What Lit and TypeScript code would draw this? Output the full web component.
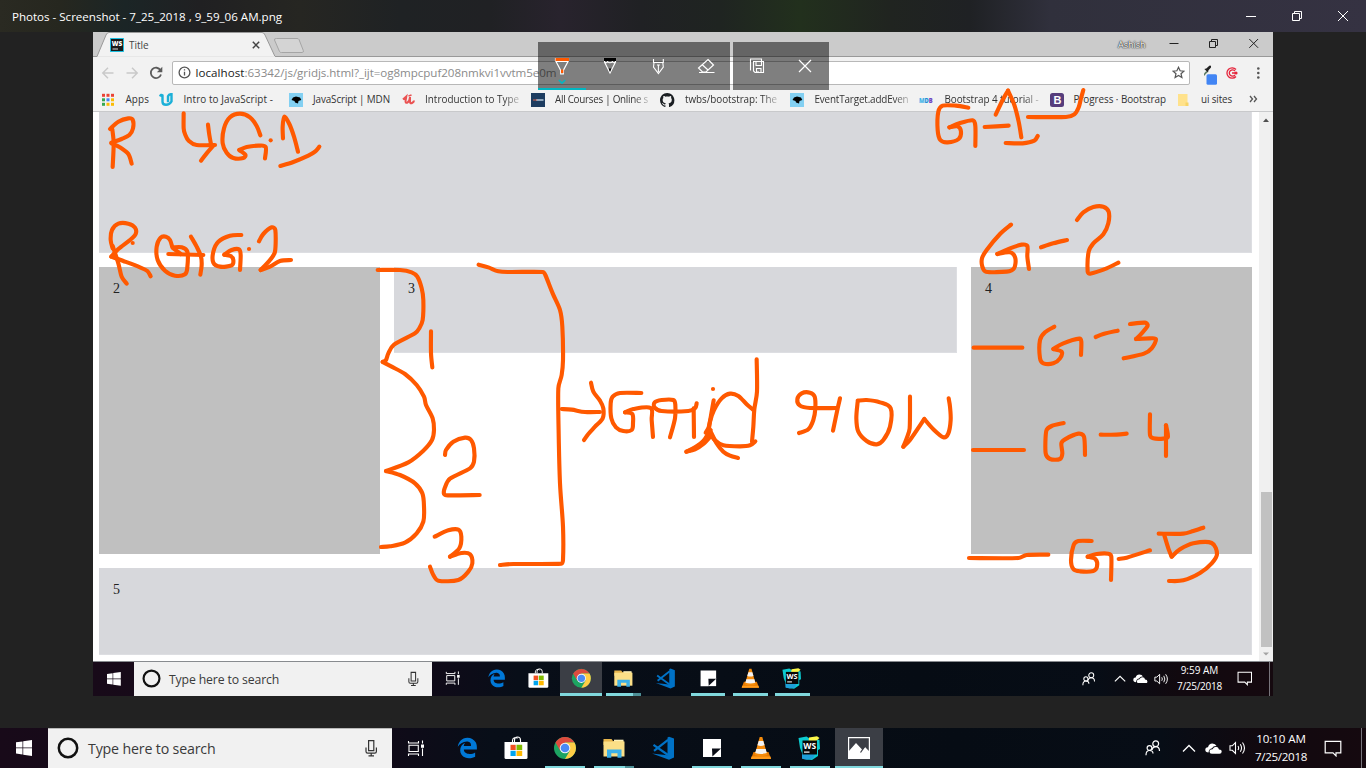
import { LitElement, html, svg, css } from "lit";
import { customElement, property } from "lit/decorators.js";

type Pt = [number, number];

/* A single line of text whose letter spacing is tuned to fill a given width. */
@customElement("fit-label")
class FitLabel extends LitElement {
  @property({ type: Number }) w = 0;
  @property() text = "";
  static styles = css`
    :host { display: block; white-space: pre; flex: none; }
    .t { display: inline-block; white-space: pre; }
  `;
  render() {
    return html`<span class="t">${this.text}</span>`;
  }
  updated() {
    const el = this.renderRoot.querySelector(".t") as HTMLElement;
    el.style.letterSpacing = "0px";
    const range = document.createRange();
    range.selectNodeContents(el);
    const n = this.text.length;
    const zoom = Number(getComputedStyle(this).getPropertyValue("--z")) || 1;
    const natural = range.getBoundingClientRect().width / zoom;
    if (this.w && n) el.style.letterSpacing = `${((this.w - natural) / n).toFixed(3)}px`;
  }
}

/* Points joined by a smooth curve. */
function curve(p: Pt[]): string {
  if (p.length === 1) return `M${p[0]}h.1`;
  let d = `M${p[0]}`;
  for (let i = 0; i < p.length - 1; i++) {
    const a = p[i - 1] ?? p[i], b = p[i], c = p[i + 1], e = p[i + 2] ?? c;
    const len = Math.hypot(c[0] - b[0], c[1] - b[1]);
    const t = (u: Pt, v: Pt): Pt => {
      const l = Math.hypot(v[0] - u[0], v[1] - u[1]) || 1;
      const k = Math.min(1 / 6, (len * 0.36) / l);
      return [(v[0] - u[0]) * k, (v[1] - u[1]) * k];
    };
    const t1 = t(a, c), t2 = t(b, e);
    d += `C${b[0] + t1[0]},${b[1] + t1[1]} ${c[0] - t2[0]},${c[1] - t2[1]} ${c[0]},${c[1]}`;
  }
  return d;
}
const parse = (s: string): Pt[] => s.trim().split(/\s+/).map((q) => q.split(",").map(Number) as Pt);

const INK: { x: number; y: number; s: string[] }[] = [
  { x: 0, y: 0, s: [
    "330,387 355,365 385,355 398,359 399,385 388,405 365,417 334,428",
    "337,388 341,430 338,501", "334,430 362,443 385,462 395,491",
    "551,340 551,385 555,402 566,422 590,435 645,435", "624,374 628,405 633,432", "640,437 620,460 603,482",
    "781,406 770,378 750,352 720,341 690,352 672,385 668,430 680,458 700,474 730,474 736,464 718,450",
    "718,450 740,441 775,437 797,441 795,475", "812,421",
    "849,415 848,380 853,350 868,372 882,410 894,455", "841,498 880,486 925,467 945,455 958,440"] },
  { x: 906, y: 0, s: [
    "187,323 150,317 110,317 97,335 95,390 103,420 125,427 158,417 165,395 155,379 130,382",
    "130,382 160,370 200,361 208,378 208,438", "236,381 308,377",
    "269,344 290,300 306,272", "306,272 325,315 338,365 346,412", "299,429 350,430 385,422 395,408",
    "366,351 480,351 505,343 518,322 525,295 532,270"] },
  { x: 90, y: 180, s: [
    "68,205 62,180 66,150 85,131 115,131 135,143 137,162 120,180 85,207 64,230",
    "68,198 85,250 95,290 110,311", "64,230 100,243 150,262 172,273 182,289", "128,189",
    "247,202 240,180 228,170 212,173 200,200 203,240 225,272 255,287 285,283 292,262 292,215 275,202 250,202",
    "250,205 272,222", "235,222 340,225", "303,170 320,200 333,230 335,255 331,284",
    "454,165 420,167 385,185 370,215 370,248 390,260 425,256 430,240 422,228 403,224",
    "403,224 425,210 447,208 452,225 450,270", "477,207",
    "507,184 520,162 545,142 556,150 555,215 540,240 512,270", "512,270 540,260 570,243 603,240"] },
  { x: 370, y: 250, s: [
    "23,60 90,60 125,67 142,80 155,115 160,150 158,210 148,235 135,250 72,284 55,310 48,330 38,336",
    "38,336 65,350 105,372 140,405 162,440 168,465 188,505 192,540 186,570 160,602 115,637 48,663",
    "48,663 90,675 135,700 157,730 162,770 160,815 140,850 105,878 60,889 33,891",
    "183,244 183,310 187,352",
    "225,615 228,600 250,575 285,563 303,570 312,595 312,635 300,655 240,686 225,712 222,732 235,736 329,735",
    "194,860 235,841 265,839 274,860 268,895 240,920", "240,920 275,909 300,913 307,940 295,965 265,990 205,992 190,975 180,950",
    "326,44 355,52 385,64 420,66 518,66 526,75 548,130 570,180 577,230 579,330 575,375 565,415 566,550 570,700 579,830 579,930 574,941 430,942 390,945",
    "575,477 605,479 645,486 690,486"] },
  { x: 580, y: 340, s: [
    "33,128 40,155 60,182 70,205 68,235 45,260 25,282 12,300",
    "184,159 120,159 98,170 92,190 94,235 108,262 130,273 155,270 159,250 157,222 135,217",
    "135,217 160,207 212,204 215,240 219,291",
    "350,190 345,205 325,213 245,213 224,203 224,187 245,180 280,180 286,195 285,235 270,292", "341,205 342,291",
    "401,181 395,215 386,262 377,278", "319,335 345,328 370,312 395,285", "319,335 345,322 370,303 388,275", "325,333 350,321 375,300 392,270",
    "399,147", "530,58 531,155 523,208 520,260 516,305",
    "518,208 500,193 475,168 450,161 425,175 402,210 390,245 386,275", "386,275 405,301 430,316 480,319 510,316 526,304",
    "392,275 410,310 430,335 450,347 474,354",
    "657,279 685,268 700,240 706,205 704,170 690,158 665,160 652,178 660,197 690,204 770,204", "780,175 773,205 759,272",
    "833,182 860,180 900,187 932,205 930,260 910,300 890,313 860,303 835,275 829,235 833,185",
    "990,170 989,265 980,295 970,320", "970,320 990,300 1033,237", "1033,237 1060,268 1090,292 1105,280 1112,240 1110,200 1106,175"] },
  { x: 950, y: 190, s: [
    "183,104 150,132 110,180 96,205 97,230 108,245 170,245 192,235 196,205 180,187 142,192",
    "142,192 180,175 215,164 232,168 232,200 237,237", "273,172 310,160 351,150",
    "381,90 400,67 430,51 460,50 476,65 475,100 460,133 430,160 416,185 413,245 420,251 470,235 505,218",
    "71,473 217,473",
    "313,410 285,427 270,450 270,505 280,520 310,520 330,505 335,485 310,477",
    "310,477 340,460 388,446 394,455 393,495", "437,441 460,432 503,422",
    "540,402 585,398 593,407 575,430 558,447", "558,447 600,445 618,448 605,475 582,491 521,505"] },
  { x: 950, y: 390, s: [
    "69,180 222,180",
    "341,99 305,108 289,122 287,190 300,207 330,207 337,190 334,160 345,148 385,131 402,140 405,195",
    "452,134 500,134 530,131", "600,73 600,135 610,145 640,146 653,142 653,130 648,106", "648,106 648,198",
    "57,504 205,504 230,495 295,494",
    "425,453 385,453 371,465 363,510 370,537 390,544 430,543 441,530 437,508 413,500",
    "413,500 440,492 475,491 484,500 483,570", "506,507 530,503 600,481",
    "626,431 700,431 730,423 760,413", "643,436 655,475 665,500", "665,500 690,478 730,460 785,459 801,492 785,520 750,549 700,571 657,573"] },
];

@customElement("ink-layer")
class InkLayer extends LitElement {
  static styles = css`
    :host { display: block; }
    svg { display: block; }
    path { fill: none; stroke: #ff5900; stroke-width: 12.4; stroke-linecap: round; stroke-linejoin: round; }
  `;
  render() {
    return html`<svg width="1366" height="768" viewBox="0 0 1366 768">
      ${INK.map((g) => svg`<g transform="translate(${g.x} ${g.y}) scale(.33333)">
        ${g.s.map((s) => svg`<path d=${curve(parse(s))}></path>`)}
      </g>`)}
    </svg>`;
  }
}

const icons: Record<string, unknown> = {
  edge: svg`<path transform="translate(1.7 1.3) scale(.0415)" fill="#0078d7" d="M25.7 228.2l.3-.5zM486.300 243.700c0-44-7.800-84.500-28.800-122.400C416.500 47.900 343.900 8 258.900 8 119 7.700 40.600 113.200 26.100 227.700c42.400-61.300 117-121.400 220.300-125 0 0 109.700 0 99.400 105H170c6.400-37.400 18.600-59 34.300-78.900-75 34.900-121.800 96-120.700 188.300.8 71.400 50.100 144.800 120.700 172 83.400 31.800 192.800 7.200 240.200-21.400V363.300c-80.900 56.500-270.900 60.900-272.300-67.600h314.100z"></path>`,
  store: svg`<path fill="none" stroke="#fff" stroke-width="1.1" d="M8.500 6V4.500a3 3 0 0 1 5-2.200M10.500 6V4a3 3 0 0 1 6 0V6"></path>
    <path fill="#fff" d="M.5 6h23v15.500q0 1.500-1.500 1.500H2q-1.500 0-1.500-1.500z"></path>
    <path fill="#f25022" d="M6.500 8.800h5.200V14H6.500z"></path><path fill="#7fba00" d="M12.500 8.800h5.700V14h-5.700z"></path>
    <path fill="#00a4ef" d="M6.500 14.800h5.200V20H6.500z"></path><path fill="#ffb900" d="M12.500 14.800h5.700V20h-5.700z"></path>`,
  chrome: svg`<circle cx="12" cy="12" r="11" fill="#1da462"></circle>
    <path fill="#dd4b3e" d="M2.500 6.500A11 11 0 0 1 21.500 6.500H12L7.200 14.800z"></path>
    <path fill="#ffcd46" d="M21.500 6.500A11 11 0 0 1 12 23L16.800 14.800 12 6.500z"></path>
    <circle cx="12" cy="12" r="5.300" fill="#f5f5f5"></circle><circle cx="12" cy="12" r="4.300" fill="#4a8af4"></circle>`,
  folder: svg`<path fill="#e8b64c" d="M1.500 3h8l1.500 2h10.500v4H1.500z"></path><path fill="#fff2b8" d="M12 3.700h9.500v2H12z"></path>
    <path fill="#fbdf87" d="M1.500 5.500h21V20.500h-21z"></path><path fill="#3bb0e8" d="M5 13.500h14.500v8.200H15.500v-4.500H9.300v4.500H5z"></path>`,
  code: svg`<path fill="#0072c6" d="M18 .7l5 1.800V21.500l-5 2.300L1 17.500l15.500 1.700V1.500z"></path>
    <path fill="none" stroke="#0072c6" stroke-width="2.200" d="M17 3.800L3 14.800M2.500 8.800L17 19"></path>`,
  note: svg`<path fill="#fff" d="M3 3h18v9L12 21H3z"></path><path fill="#fff" d="M12 12h9v9h-9z"></path><path d="M12 12.500h9L12.400 20.500z" fill="#0a0d16"></path>`,
  vlc: svg`<path fill="#e67a00" d="M4.500 16h15l2.500 7H2z"></path><path fill="#ff9a1a" d="M2.500 20.500h19L22 23H2z"></path>
    <path fill="#f58b0b" d="M10.700 1h2.600l5 18q-6.300 2.500-12.600 0z"></path><path fill="#f3f3f3" d="M9.700 5h4.600l1.300 4.300q-3.600 1.200-7.200 0zM7.300 13h9.400l1.100 4q-5.800 1.800-11.600 0z"></path>`,
  ws: svg`<path fill="#0ccbd0" d="M.5 2l8-1.500 3 2 6 .500 4 1 .5 9-2 1v6l-6 4-9-1-1-6L2 12z"></path>
    <path fill="#1d9fd8" d="M4 18l13 0-2 4.500-6 1.200-5-1z"></path>
    <path fill="#fcf84a" d="M11 1.500l8-1.200L21.500 2l-5 4.500h-6z"></path>
    <path fill="#080808" d="M4.500 4.500h14.500v14H4.500z"></path>
    <text x="5.300" y="12.500" font-size="8" font-weight="700" font-family="Open Sans, sans-serif" textLength="12.800" lengthAdjust="spacingAndGlyphs" fill="#fff">WS</text>
    <path fill="#fff" d="M6 15.500h5.500v1.200H6z"></path>`,
  photos: svg`<path fill="none" stroke="#fff" stroke-width="1.200" d="M1.600 1.600h20.800v20.800H1.600z"></path>
    <path fill="#fff" d="M1.500 15.500L9 7l6.500 7 2.500-3 4.500 4.500v7h-21z"></path><path stroke="#3b3e45" stroke-width="1.200" d="M13.500 16.500l4-5.700"></path>`,
};

interface App { icon: string; state?: "run" | "many" }
const APPS: App[] = [
  { icon: "edge" }, { icon: "store" }, { icon: "chrome", state: "run" }, { icon: "folder", state: "many" },
  { icon: "code" }, { icon: "note", state: "run" }, { icon: "vlc", state: "run" }, { icon: "ws", state: "run" },
];

@customElement("task-bar")
class TaskBar extends LitElement {
  @property() time = "";
  @property() active = "";
  @property({ type: Number }) timeWidth = 48;
  static styles = css`
    :host { display: block; width: 1366px; height: 40px; font-family: "Open Sans", "Noto Sans", sans-serif; }
    .bar { display: flex; height: 40px; background: linear-gradient(90deg, #180a19 0, #100a18 28%, #080e18 36%, #060c14 70%, #070d16 85%, #11090f 92%, #15090f 100%); }
    .cell { width: 48px; height: 40px; display: flex; align-items: center; justify-content: center; flex: none; position: relative; }
    .search { width: 344px; background: #f1f1f1; display: flex; align-items: center; box-shadow: inset 0 1px #b9b9b9; color: #3a3a3a; flex: none; font-size: 14.200px; }
    .search fit-label { padding-top: var(--dy, 0px); }
    .ring { width: 22px; margin: 0 9px; height: 22px; }
    .mic { margin-left: auto; margin-right: 14px; }
    .apps { display: flex; gap: 1px; margin-left: 3px; }
    .on { background: #3b3e45; }
    .line { position: absolute; bottom: 0; height: var(--line, 2px); left: 4px; right: 4px; background: #80d8dd; }
    .on .line { left: 0; right: 0; }
    .many .line { background: linear-gradient(90deg, #80d8dd 78%, #4d8f96 78%); }
    .tray { display: flex; margin-left: auto; }
    .half { width: 24px; }
    .clock { width: 60px; display: flex; flex-direction: column; align-items: center; color: #fff; font-size: 11.600px; line-height: 18px; padding: 2px 0 0 4px; box-sizing: border-box; }
    .show { width: 4px; border-left: 1px solid #77747b; margin-left: 4px; }
    svg { display: block; }
  `;
  render() {
    const apps = this.active === "photos" ? [...APPS, { icon: "photos", state: "run" } as App] : APPS;
    return html`<div class="bar">
      <div class="cell"><svg width="16" height="16" viewBox="0 0 16 16" fill="#fff"><path d="M0 2.300L6.500 1.400V7.600H0zM7.200 1.300L16 0V7.600H7.200zM0 8.300h6.500v6.200L0 13.600zM7.200 8.300H16V16l-8.800-1.300z"></path></svg></div>
      <div class="search">
        <svg class="ring" viewBox="0 0 22 22"><circle cx="11" cy="11" r="9.200" fill="none" stroke="#111" stroke-width="2.500"></circle></svg>
        <fit-label .w=${127.5} .text=${"Type here to search"}></fit-label>
        <svg class="mic" width="13" height="18" viewBox="0 0 13 18" fill="none" stroke="#333" stroke-width="1.200"><path d="M3.600 1.600h5.200v10H3.600zM1 8.500v4q0 1.700 1.700 1.700h7q1.700 0 1.700-1.700v-4M6.200 14.200v2.500M3.500 16.800h5.500"></path></svg>
      </div>
      <div class="cell"><svg width="18" height="17" viewBox="0 0 18 17" fill="none" stroke="#fff" stroke-width="1.100"><path d="M1.500 1v2h10V1M1.500 16v-2h10v2M2 5.300h9.300v6.200H2zM15.500.5v3M15.500 8.500V16"></path><path fill="#fff" stroke="none" d="M14 4.500h3v3.300h-3z"></path></svg></div>
      <div class="apps">${apps.map((a) => html`<div class="cell ${a.icon === this.active ? "on" : ""} ${a.state ?? ""}">
        <svg width="24" height="24" viewBox="0 0 24 24">${icons[a.icon]}</svg>${a.state ? html`<i class="line"></i>` : ""}</div>`)}</div>
      <div class="tray">
        <div class="cell"><svg width="16" height="16" viewBox="0 0 16 16" fill="none" stroke="#fff" stroke-width="1.200"><circle cx="4.500" cy="8" r="2.400"></circle><circle cx="10.700" cy="3.800" r="2.900"></circle><path d="M1 15.300q0-4.800 3.500-4.800T8 13.500M6.800 10q1-3.300 4-3.300 3.600 0 3.700 4.300"></path></svg></div>
        <div class="cell half"><svg width="14" height="9" viewBox="0 0 14 9" fill="none" stroke="#fff" stroke-width="1.300"><path d="M1 7.500L7 1.500 13 7.500"></path></svg></div>
        <div class="cell half"><svg width="17" height="11" viewBox="0 0 17 11" fill="#fff"><path d="M3.500 9.500Q.3 9.500.3 6.800T3 4.200Q4 .5 7.300.5T11.500 3Q8.500 2.500 7 5.200 4 5.500 3.500 9.500z"></path><path d="M6.800 10.800Q4.500 10.800 4.500 8.500T7.500 6.200Q8.500 3.700 11 3.700T14 6.400Q16.700 6.400 16.700 8.600T14.500 10.800z"></path></svg></div>
        <div class="cell half"><svg width="17" height="14" viewBox="0 0 17 14" fill="none" stroke="#fff" stroke-width="1.100"><path d="M1 4.800h2.300L6.500 1.500V12.500L3.300 9.300H1zM9 5q1.300 2 0 4M11.300 3.300q2.500 3.700 0 7.400M13.500 1.500q4 5.500 0 11"></path></svg></div>
        <div class="clock"><fit-label .w=${this.timeWidth} .text=${this.time}></fit-label><fit-label .w=${52} .text=${"7/25/2018"}></fit-label></div>
        <div class="cell"><svg width="18" height="17" viewBox="0 0 18 17" fill="none" stroke="#fff" stroke-width="1.200"><path d="M1.200 1.200h15.600v11.500H12v3L9 12.700H1.200z" transform="translate(0 .2)"></path></svg></div>
        <div class="show"></div>
      </div>
    </div>`;
  }
}

const mdn = svg`<path fill="#83d0f2" d="M0 0h14v14H0z"></path><path fill="#000" d="M2.500 7L4 4.500 7 3.500 11 4.500 12.300 7 9.500 8 9 10.500 6 9.500 5.500 8z"></path>`;
interface Mark { w: number; slot: number; label: string; t: number; fade?: boolean; art: unknown }
const MARKS: Mark[] = [
  { w: 57, slot: 23.5, label: "Apps", t: 23.5, art: svg`${[["#ea4335", "#ea4335", "#ea4335"], ["#34a853", "#4285f4", "#fbbc05"], ["#34a853", "#fbbc05", "#fbbc05"]].map((r, j) => r.map((c, i) => svg`<path fill=${c} d="M${i * 4.5} ${j * 4.5 + 0.8}h3v3h-3z"></path>`))}` },
  { w: 130, slot: 24.5, label: "Intro to JavaScript -", t: 89.5, art: svg`<path fill="none" stroke="#1cb0d8" stroke-width="2.400" d="M1 3.500q1-2.500 2.500-1.200v6.500q0 3 3.500 3t5.500-3.300V1.200Q10 1 9 3.200v6"></path>` },
  { w: 113, slot: 24, label: "JavaScript | MDN", t: 77, art: mdn },
  { w: 129, slot: 23, label: "Introduction to Type", t: 94, fade: true, art: svg`<path fill="none" stroke="#ea5252" stroke-width="2" d="M1 6.500L4.300 3.500 3.500 8q0 2.500 2 1.500t2.500-5.500v4.500q0 2.500 2 1.500t2-2.500"></path><path stroke="#ea5252" stroke-width="1.500" d="M6.500 3l3-1"></path>` },
  { w: 129, slot: 24, label: "All Courses | Online s", t: 93, fade: true, art: svg`<path fill="#1d3c60" d="M0 0h14v14H0z"></path><path fill="#8ea5bb" d="M5 6h7.500v2H5z"></path><path fill="#d4604d" d="M2 6.500h4v1H2z"></path>` },
  { w: 130, slot: 25, label: "twbs/bootstrap: The", t: 92, fade: true, art: svg`<path fill="#1b1f23" transform="scale(.9)" d="M8 0C3.580 0 0 3.580 0 8c0 3.540 2.290 6.530 5.470 7.590.4.070.550-.170.550-.380 0-.190-.010-.820-.010-1.490-2.010.370-2.530-.490-2.690-.940-.090-.230-.480-.940-.820-1.130-.280-.150-.680-.520-.010-.530.630-.010 1.080.580 1.230.820.720 1.210 1.870.870 2.330.660.070-.520.280-.870.510-1.070-1.780-.200-3.640-.890-3.640-3.950 0-.870.310-1.590.820-2.150-.080-.200-.360-1.020.080-2.120 0 0 .670-.210 2.200.820.640-.180 1.320-.270 2-.270s1.360.090 2 .270c1.530-1.040 2.200-.820 2.200-.820.440 1.100.160 1.920.080 2.120.510.560.820 1.270.820 2.150 0 3.070-1.870 3.750-3.650 3.950.290.250.540.730.540 1.480 0 1.070-.010 1.930-.010 2.200 0 .210.150.460.550.380A8.010 8.010 0 0 0 16 8c0-4.420-3.580-8-8-8z"></path>` },
  { w: 129, slot: 24.5, label: "EventTarget.addEven", t: 94, fade: true, art: mdn },
  { w: 131, slot: 25.5, label: "Bootstrap 4 tutorial -", t: 94, fade: true, art: svg`<text x="0" y="9.500" font-size="6.500" font-weight="800" font-family="Open Sans, sans-serif" textLength="13.700" lengthAdjust="spacingAndGlyphs"><tspan fill="#45b5e8">M</tspan><tspan fill="#1f8fd8">D</tspan><tspan fill="#6f42c1">B</tspan></text>` },
  { w: 128, slot: 23.5, label: "Progress · Bootstrap", t: 92.5, art: svg`<rect width="14" height="14" rx="2.500" fill="#563d7c"></rect><text x="3.500" y="11" font-size="11" font-weight="700" font-family="Liberation Sans, sans-serif" fill="#fff">B</text>` },
  { w: 71, slot: 23, label: "ui sites", t: 31, art: svg`<path fill="#ffe28c" d="M0 1h9.500v12H0z"></path><path fill="#f7d467" d="M7.500 9.500h3v3.500H7.500z"></path>` },
];

@customElement("app-root")
class AppRoot extends LitElement {
  static styles = css`
    :host { display: block; width: 1366px; height: 768px; overflow: hidden; background: #222; font-family: "Open Sans", "Noto Sans", sans-serif; position: relative; }
    * { box-sizing: border-box; }
    svg { display: block; flex: none; }
    .title { height: 32px; display: flex; align-items: center; padding-left: 12px; color: #fff; font-size: 11.600px;
      background: linear-gradient(90deg, #2a2a22 0, #26271f 60px, #1b2526 125px, #202022 200px, #262622 300px, #1f2224 400px, #202124 490px, #28232d 560px, #202124 640px, #1f2421 720px, #22301d 800px, #202420 890px, #1f2124 970px, #30303c 1050px, #353242 1366px); }
    .win { display: flex; margin-left: auto; }
    .win > * { width: 46px; height: 32px; }
    .stage { height: 696px; padding: 0 93px; }
    .shot { width: 1180px; height: 664px; background: #fff; display: flex; flex-direction: column; }
    .tabs { height: 25px; background: #cbcbcb; border-bottom: 1px solid #999; display: flex; position: relative; flex: none; }
    .tab { width: 186px; height: 25px; display: flex; align-items: center; padding-left: 17px; position: relative; color: #444; font-size: 10px; }
    .tab > svg.bg { position: absolute; left: 0; top: 0; }
    .tab > fit-label, .tab > svg { position: relative; }
    .tab > fit-label { margin-left: 5px; width: 123px; }
    .newtab { margin: 5px 0 0 -6px; }
    .cw { display: flex; align-items: center; margin-left: auto; height: 24px; color: #fff; font-size: 9px; }
    .cw fit-label { text-shadow: 0 0 1px #222, 0 0 1px #333, 0 0 2px #444; width: 28px; margin-right: 7px; }
    .cw svg { width: 40px; height: 24px; }
    .nav { height: 31px; background: #f2f2f2; display: flex; align-items: center; padding-left: 3px; flex: none; }
    .nav .b { width: 24px; height: 24px; }
    .url { width: 1018px; height: 24px; margin-left: 4px; border: 1px solid #b8b8b8; border-radius: 2px; background: #fff; display: flex; align-items: center; font-size: 11.600px; color: #8b8b8b; padding: 0 4px 0 5px; }
    .url .host { color: #222; margin-left: 4.500px; }
    .url .star { margin-left: auto; }
    .ext { margin-left: 14px; }
    .marks { height: 24px; background: #f2f2f2; border-bottom: 1px solid #c8c9cb; display: flex; align-items: flex-start; padding-left: 9px; font-size: 9.900px; color: #333; flex: none; }
    .mark, .more { display: flex; align-items: center; flex: none; height: 23px; }
    .slot { flex: none; }
    .mark fit-label, .more svg { margin-top: -1px; }
    .fade { -webkit-mask-image: linear-gradient(90deg, #000 84%, rgba(0,0,0,.25) 100%); mask-image: linear-gradient(90deg, #000 84%, rgba(0,0,0,.25) 100%); }
    .page { flex: 1; display: flex; background: #fff; min-height: 0; }
    .grid { width: 1153px; margin-left: 6px; display: grid; grid-template-columns: 281px 563px 281px; grid-template-rows: 141px 86px 187px 87px; gap: 14px; align-content: start; font: 14px "Liberation Serif", serif; color: #222; }
    .tile { background: #d7d8dc; padding: 14px; line-height: 15px; box-shadow: inset -1px -1px #dddee2; }
    .wide { grid-column: 1 / 4; }
    .tall { background: #c0c0c0; box-shadow: none; grid-row: 2 / 4; }
    .left { grid-column: 1; }
    .middle { grid-column: 2; grid-row: 2; }
    .right { grid-column: 3; }
    .scroll { width: 14px; margin-left: auto; background: #f0f0f0; display: flex; flex-direction: column; align-items: center; }
    .thumb { margin-top: auto; width: 11px; height: 155px; background: #c1c1c1; }
    .inner { height: 35px; overflow: hidden; background: #0b0c15; position: relative; padding-top: 0.450px; }
    .inner task-bar { zoom: 0.86384; --z: 0.86384; --line: 3px; --dy: 2px; }
    .edge { position: absolute; left: 0; right: 0; top: 0; height: 1px; background: #888b8f; }
    .ink { position: absolute; left: 0; top: 0; }
    .pens { position: absolute; left: 538px; top: 42px; display: flex; gap: 3px; }
    .group { display: flex; background: rgba(0, 0, 0, 0.5); height: 48px; }
    .pen { width: 48px; height: 48px; }
    .sel { border-bottom: 2px solid #00b7c3; }
  `;
  render() {
    return html`
      <header class="title">
        <fit-label .w=${270} .text=${"Photos - Screenshot - 7_25_2018 , 9_59_06 AM.png"}></fit-label>
        <div class="win">
          <svg viewBox="0 0 46 32" stroke="#fff"><path d="M18 16.500h10"></path></svg>
          <svg viewBox="0 0 46 32" stroke="#fff" fill="none"><path d="M18.500 13.500h7v7h-7zM20.500 13.500v-2h7v7h-2"></path></svg>
          <svg viewBox="0 0 46 32" stroke="#fff"><path d="M18 11l10 10M28 11L18 21"></path></svg>
        </div>
      </header>
      <main class="stage"><div class="shot">
        <div class="tabs">
          <div class="tab">
            <svg class="bg" width="186" height="25"><path d="M0 24.500H4L13 3q1-2.500 3-2.500H169q2 0 3 2.500L182 24.500" fill="#f2f2f2" stroke="#999"></path><path d="M4.500 25H182" stroke="#f2f2f2" stroke-width="1.600"></path></svg>
            <svg width="14" height="14" viewBox="0 0 14 14"><path fill="#1a1a1a" stroke="#1bbfe0" d="M.5.5h13v13H.5z"></path><text x="1.800" y="7.500" font-size="6" font-weight="800" font-family="Open Sans, sans-serif" textLength="10.500" lengthAdjust="spacingAndGlyphs" fill="#fff">WS</text><path fill="#ddd" d="M2.500 10.500H8v1H2.500z"></path></svg>
            <fit-label .w=${19.5} .text=${"Title"}></fit-label>
            <svg width="8" height="8" viewBox="0 0 8 8" stroke="#444" stroke-width="1.500"><path d="M.8.800l6.400 6.400M7.200.8L.8 7.200"></path></svg>
          </div>
          <svg class="newtab" width="32" height="17" viewBox="0 0 32 17"><path d="M3.500 1.500H24q1.500 0 2 1l4.300 11q.5 2-1 2H8.500q-1.500 0-2-1L1.500 3q-.5-1.500 2-1.500z" fill="#d4d4d4" stroke="#a5a5a5"></path></svg>
          <div class="cw"><fit-label .w=${27.5} .text=${"Ashish"}></fit-label>
            <svg viewBox="0 0 40 24" stroke="#222"><path d="M16.500 11.500h9"></path></svg>
            <svg viewBox="0 0 40 24" stroke="#222" fill="none"><path d="M16.500 9.500h6v6h-6zM18.500 9.500v-2h6v6h-2"></path></svg>
            <svg viewBox="0 0 40 24" stroke="#222"><path d="M16.300 7l8.800 8.800M25.100 7l-8.800 8.800"></path></svg>
          </div>
        </div>
        <div class="nav">
          <svg class="b" viewBox="0 0 24 24" fill="none" stroke="#c9c9c9" stroke-width="1.500"><path d="M17.500 12H7M12 6.800L6.800 12l5.200 5.200"></path></svg>
          <svg class="b" viewBox="0 0 24 24" fill="none" stroke="#c9c9c9" stroke-width="1.500"><path d="M6.500 12H17M12 6.800l5.200 5.200-5.200 5.200"></path></svg>
          <svg class="b" viewBox="0 0 24 24" fill="none" stroke="#5a5a5a" stroke-width="1.800"><path d="M16.500 9.200A5.200 5.200 0 1 0 17 13.500"></path><path fill="#5a5a5a" stroke="none" d="M18.300 5.800v5.400h-5.400z"></path></svg>
          <div class="url">
            <svg width="13" height="13" viewBox="0 0 13 13" fill="none" stroke="#555" stroke-width="1.300"><circle cx="6.500" cy="6.500" r="5.400"></circle><path d="M6.500 5.700v3.800M6.500 3.300v1.300"></path></svg>
            <fit-label class="host" .w=${49} .text=${"localhost"}></fit-label><fit-label .w=${312} .text=${":63342/js/gridjs.html?_ijt=og8mpcpuf208nmkvi1vvtm5e0m"}></fit-label>
            <svg class="star" width="13" height="13" viewBox="0 0 13 13" fill="none" stroke="#555" stroke-width="1.200"><path d="M6.500 1.300l1.600 3.500 3.800.4-2.900 2.500.9 3.800-3.400-2-3.400 2 .9-3.800L1.100 5.200l3.800-.4z"></path></svg>
          </div>
          <svg class="ext" width="60" height="24" viewBox="0 0 60 24"><g transform="translate(-5 0)"><path stroke="#5b7a63" stroke-width="1.800" d="M.5 17.500L7 10.500" transform="translate(1 0)"></path><path d="M5.300 8l2-.5 3-2.800q2.300-.7 1.700 1.800L9.500 9.300l-.5 2.200z" fill="#222"></path><rect x="7.500" y="13.300" width="10.500" height="10.500" rx="1.500" fill="#4285f4"></rect>
            <g fill="none" stroke="#e5243b" stroke-width="1.300"><path d="M37 8.500A5.200 5.200 0 1 0 37 15.500M36 10A3.200 3.200 0 1 0 36 14M33 12h5"></path></g><circle cx="37" cy="12" r="1.600" fill="#e5243b"></circle>
            <g fill="#555"><circle cx="59.300" cy="7.500" r="1.300"></circle><circle cx="59.300" cy="12" r="1.300"></circle><circle cx="59.300" cy="16.500" r="1.300"></circle></g></g></svg>
        </div>
        <div class="marks">
          ${MARKS.map((m) => html`<div class="mark" style="width:${m.w}px">
            <div class="slot" style="width:${m.slot}px"><svg width="15" height="14" viewBox="0 0 15 14">${m.art}</svg></div>
            <fit-label class=${m.fade ? "fade" : ""} .w=${m.t} .text=${m.label}></fit-label>
          </div>`)}
          <div class="more"><svg width="10" height="8" viewBox="0 0 10 8" fill="none" stroke="#555" stroke-width="1.300"><path d="M1 1l2.500 3L1 7M5 1l2.500 3L5 7"></path></svg></div>
        </div>
        <div class="page">
          <div class="grid">
            <div class="tile wide"></div>
            <div class="tile tall left">2</div>
            <div class="tile middle">3</div>
            <div class="tile tall right">4</div>
            <div class="tile wide">5</div>
          </div>
          <div class="scroll">
            <svg width="14" height="14" viewBox="0 0 14 14"><path fill="#505050" d="M4 10l3-3.500 3 3.500z"></path></svg>
            <div class="thumb"></div>
            <svg width="14" height="14" viewBox="0 0 14 14"><path fill="#a3a3a3" d="M4 5.500h6L7 8.500z"></path></svg>
          </div>
        </div>
        <div class="inner"><task-bar time="9:59 AM" .timeWidth=${43.5} active="chrome"></task-bar><div class="edge"></div></div>
      </div></main>
      <task-bar time="10:10 AM" .timeWidth=${49.5} active="photos"></task-bar>
      <ink-layer class="ink"></ink-layer>
      <div class="pens">
        <div class="group">
          <svg class="pen sel" viewBox="0 0 48 46" fill="none" stroke="#fff" stroke-width="1.200"><path d="M18 19.500l4.700 9v3.500h2.600v-3.500l4.700-9zM17.500 19v-3M30.500 19v-3"></path><path fill="#ff5900" stroke="none" d="M17.500 16h13.500v3H17.500zM23 27.500h2.300V31H23z"></path><path stroke="#00b7c3" stroke-width="1.700" d="M20.800 38l3.200 3 3.200-3"></path></svg>
          <svg class="pen" viewBox="0 0 48 48" fill="none" stroke="#fff" stroke-width="1.100"><path d="M18.500 16v4L24 31l5.500-11v-4M18.500 20q2 1.500 3-.3 2.500 2.200 5 0 1 1.800 3 .3"></path><path fill="#000" stroke="none" d="M18 16h12v3H18zM22.700 26.500h2.600L24 30z"></path></svg>
          <svg class="pen" viewBox="0 0 48 48" fill="none" stroke="#fff" stroke-width="1.100"><path d="M19.500 17v3.500h9.800V17M20 20.500L19.500 25l4.900 6.500L29.300 25l-.5-4.500M24.400 22.500V30M23 23h2.800"></path></svg>
          <svg class="pen" viewBox="0 0 48 48" fill="none" stroke="#fff" stroke-width="1.200"><path d="M26 17.500l5.500 5.500-7.500 7h-3.500l-4-4zM20 22.500l6 5.500M17 30.500h15.500"></path></svg>
        </div>
        <div class="group">
          <svg class="pen" viewBox="0 0 48 48" fill="none" stroke="#fff" stroke-width="1.100"><path d="M20.500 19.500h10v11h-8.500l-1.500-1.500zM23 19.500v4h5.500v-4M23.500 30.500v-4h4.500v4M17.500 28.500v-11.500h11v2M25 29v1"></path></svg>
          <svg class="pen" viewBox="0 0 48 48" stroke="#fff" stroke-width="1.200"><path d="M18 18l12 12M30 18L18 30"></path></svg>
        </div>
      </div>`;
  }
}
